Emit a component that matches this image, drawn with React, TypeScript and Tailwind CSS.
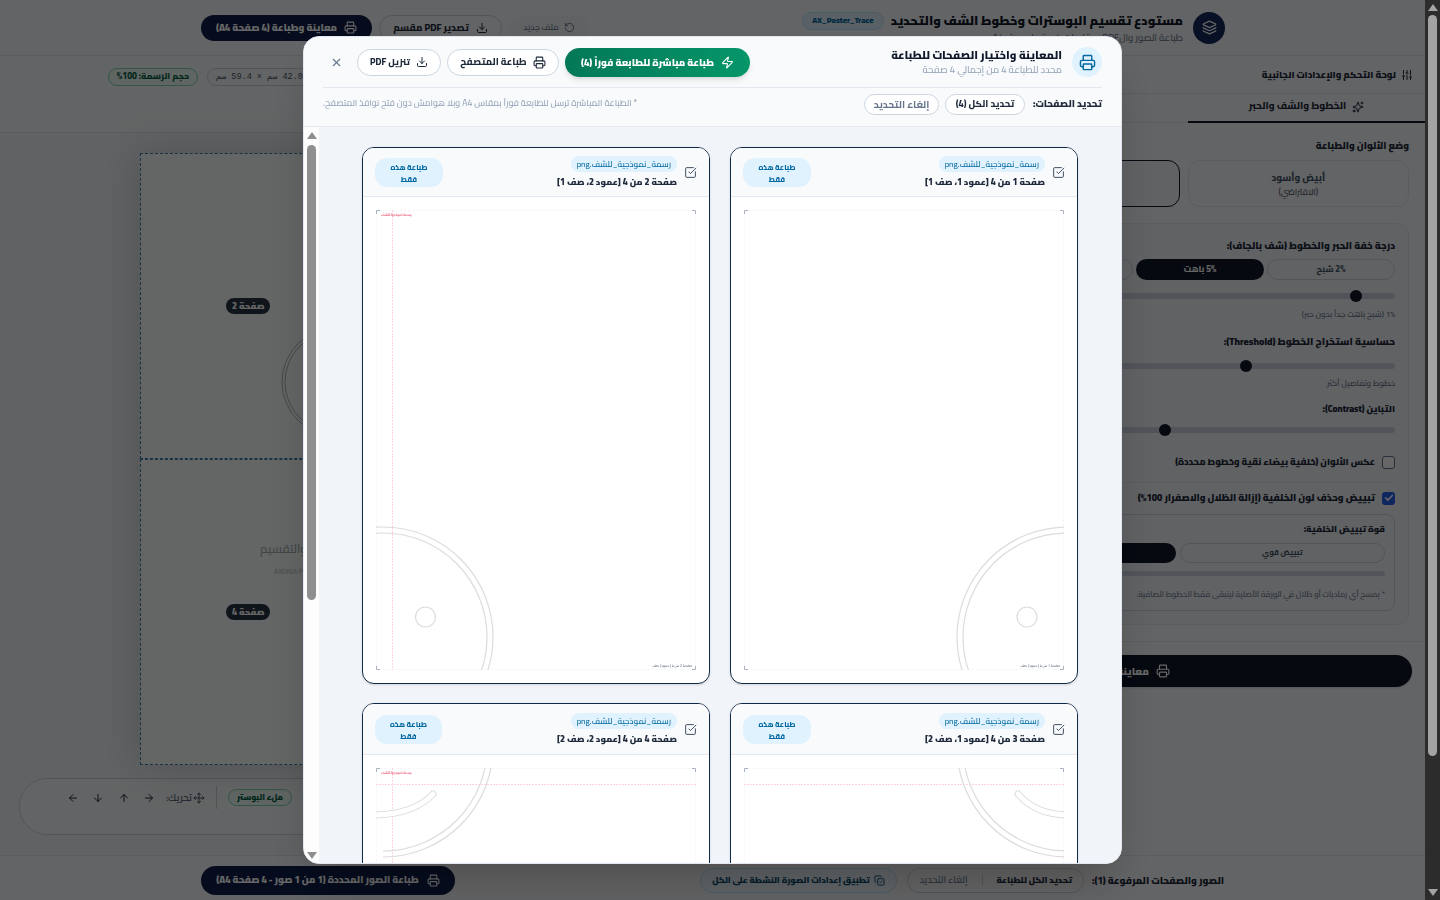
import { Layers, Printer, Download, RotateCcw, Zap, X, SquareCheckBig, SlidersVertical, Sparkles, Check, Move, ArrowLeft, ArrowDown, ArrowUp, ArrowRight, CopyCheck } from "lucide-react";
import type { ReactNode } from "react";

const font = "font-['Cairo','DejaVu_Sans',sans-serif]";

function Thumb({ cls }: { cls: string }) {
  return <div className={`absolute -top-[3px] w-3 h-3 rounded-full bg-[#0f172a] ${cls}`} />;
}

function PageArt({ n }: { n: number }) {
  const isRightCol = n === 1 || n === 3;
  const isTop = n <= 2;
  return (
    <svg viewBox="0 0 320 460" className="w-[320px] h-[460px] block" fill="none">
      <rect x="0.5" y="0.5" width="319" height="459" stroke="#f1f3f5" strokeDasharray="2 2" />
      {isRightCol ? null : <line x1="16.5" y1="0" x2="16.5" y2="460" stroke="#fcd3de" strokeDasharray="2 1" />}
      {isTop ? null : <line x1="0" y1="16.5" x2="320" y2="16.5" stroke="#fcd3de" strokeDasharray="2 1" />}
      <path d="M0.5 4V.5H4M316 .5h3.500V4M.5 456v3.500H4M316 459.500h3.500V456" stroke="#a8b1bd" />
      {n === 1 && (
        <g stroke="#dcdcdc" strokeWidth="1.2">
          <circle cx="323" cy="427" r="110" />
          <circle cx="323" cy="427" r="104" />
          <circle cx="283" cy="407" r="10" />
        </g>
      )}
      {n === 2 && (
        <g stroke="#dcdcdc" strokeWidth="1.2">
          <circle cx="7" cy="427" r="110" />
          <circle cx="7" cy="427" r="104" />
          <circle cx="49.500" cy="407" r="10" />
        </g>
      )}
      {n === 3 && (
        <g>
          <path d="M213 -21a110 110 0 0 0 110 110" stroke="#dcdcdc" strokeWidth="1.2" />
          <path d="M219 -21a104 104 0 0 0 104 104" stroke="#dcdcdc" strokeWidth="1.2" />
          <path d="M274 26Q292 47 325 47" stroke="#dcdcdc" strokeWidth="7" strokeLinecap="round" />
          <path d="M274 26Q292 47 325 47" stroke="#ffffff" strokeWidth="5" strokeLinecap="round" />
        </g>
      )}
      {n === 4 && (
        <g>
          <path d="M117 -21a110 110 0 0 1 -110 110" stroke="#dcdcdc" strokeWidth="1.2" />
          <path d="M111 -21a104 104 0 0 1 -104 104" stroke="#dcdcdc" strokeWidth="1.2" />
          <path d="M57 26Q38 47 -5 47" stroke="#dcdcdc" strokeWidth="7" strokeLinecap="round" />
          <path d="M57 26Q38 47 -5 47" stroke="#ffffff" strokeWidth="5" strokeLinecap="round" />
        </g>
      )}
      {!isRightCol && <text x="5" y="6" fontSize="3.5" fill="#e11d48" direction="rtl" textAnchor="end">رسمة نموذجية للشف</text>}
      {isTop && <text x="316" y="457" fontSize="3.5" fill="#475569" direction="rtl" textAnchor="start">{`صفحة ${n} من 4 | عمود | صف`}</text>}
    </svg>
  );
}

function PageCard({ n, col, row, pillW }: { n: number; col: number; row: number; pillW: string }) {
  return (
    <div className="w-[348px] border-[1.5px] border-[#0f2a47] rounded-xl bg-white overflow-hidden shadow-sm">
      <div className={`${row === 1 ? "h-[49px]" : "h-[51px]"} bg-[#f8fafc] border-b border-[#e2e8f0] flex items-center justify-between pr-[12px] pl-[12px]`}>
        <div className="flex items-center gap-[7px]">
          <SquareCheckBig size={13} strokeWidth={1.7} className="text-[#334155]" />
          <div className="flex flex-col items-start">
            <span className="h-[16px] px-[6px] rounded-full bg-[#e0f2fe] text-[#0369a1] text-[8.250px] font-medium leading-[16px]">رسمة_نموذجية_للشف.png</span>
            <span className="mt-[3px] text-[9px] leading-[14px] font-black text-[#1e293b]">{`صفحة ${n} من 4 [عمود ${col}، صف ${row}]`}</span>
          </div>
        </div>
        <div className={`${pillW} h-[29px] rounded-xl bg-[#e0f2fe] text-[#0369a1] text-[7.500px] leading-[12px] font-extrabold flex items-center justify-center text-center px-[12px] pt-[2px]`}>طباعة هذه فقط</div>
      </div>
      <div className="p-[13px]">
        <PageArt n={n} />
      </div>
    </div>
  );
}

function SideLabel({ children, cls }: { children: ReactNode; cls: string }) {
  return <div className={`h-[14px] leading-[14px] font-black text-[#1e293b] ${cls}`}>{children}</div>;
}

function Hint({ children, cls }: { children: ReactNode; cls: string }) {
  return <div className={`h-[12px] text-[8.250px] leading-[12px] font-medium text-[#64748b] whitespace-nowrap ${cls}`}>{children}</div>;
}

function Track({ thumb, cls }: { thumb: string; cls: string }) {
  return (
    <div className={`relative h-[6px] rounded-full bg-[#cbd5e1] ${cls}`}>
      <Thumb cls={thumb} />
    </div>
  );
}

function Sidebar() {
  return (
    <aside className="w-[484px] h-[799px] shrink-0 bg-[#f8fafc] border-l border-[#e2e8f0] flex flex-col">
      <div className="h-[38px] flex items-center gap-[5px] border-b border-[#e2e8f0] pr-[12px] shrink-0">
        <SlidersVertical size={12} className="text-[#1e293b]" />
        <span className="text-[9.200px] font-black text-[#1e293b]">لوحة التحكم والإعدادات الجانبية</span>
      </div>
      <div className="h-[29px] flex border-b border-[#e2e8f0] shrink-0">
        <div className="w-[237px] h-[29px] pb-[2px] border-b-2 border-[#0f172a] flex items-center justify-center gap-[6px] text-[9.800px] font-extrabold text-[#1e293b]">
          <Sparkles size={12} />
          الخطوط والشف والحبر
        </div>
      </div>
      <div className="mr-4 ml-4">
        <div className="mt-[15px] h-[16px] text-[9.500px] leading-[16px] font-black text-[#1e293b]">وضع الألوان والطباعة</div>
        <div className="mt-[6px] flex gap-2">
          <div className="w-[222px] h-[47px] rounded-xl border border-[#e2e8f0] flex flex-col items-center justify-center text-[#475569]">
            <span className="text-[9.600px] font-extrabold leading-[16px]">أبيض وأسود</span>
            <span className="text-[8.700px] leading-[14px] font-medium">(الافتراضي)</span>
          </div>
          <div className="w-[222px] h-[47px] rounded-xl border-[1.5px] border-[#0f172a] bg-[#f1f5f9]" />
        </div>
        <div className="mt-4 h-[402px] rounded-xl border border-[#e2e8f0] bg-[#f1f5f9] pr-[13px] pl-[13px]">
          <SideLabel cls="mt-[14px] text-[9.600px]">درجة خفة الحبر والخطوط (شف بالجاف):</SideLabel>
          <div className="mt-[7px] flex gap-[3px]">
            <div className="w-[128px] h-[21px] rounded-full border border-[#cbd5e1] flex items-center justify-center text-[8.600px] font-extrabold text-[#475569]">2% شبح</div>
            <div className="w-[128px] h-[21px] rounded-full bg-[#0f172a] flex items-center justify-center text-[8.600px] font-extrabold text-white">5% باهت</div>
            <div className="w-[128px] h-[21px] rounded-full border border-[#cbd5e1]" />
          </div>
          <Track thumb="right-[33px]" cls="mt-[13px]" />
          <Hint cls="mt-[9px]">1% (شبح باهت جداً بدون حبر)</Hint>
          <SideLabel cls="mt-[15px] text-[9.800px]">حساسية استخراج الخطوط (Threshold):</SideLabel>
          <Track thumb="right-[143px]" cls="mt-[14px]" />
          <Hint cls="mt-[8px]">خطوط وتفاصيل أكثر</Hint>
          <SideLabel cls="mt-[13px] text-[9.100px]">التباين (Contrast):</SideLabel>
          <Track thumb="right-[224px]" cls="mt-[11px]" />
          <div className="mt-[22px] h-[14px] flex items-center gap-[7px]">
            <span className="w-[13px] h-[13px] rounded-[3px] border border-[#64748b] bg-white" />
            <span className="text-[9.100px] font-black text-[#1e293b]">عكس الألوان (خلفية بيضاء نقية وخطوط محددة)</span>
          </div>
          <div className="mt-[13px] h-px bg-[#e2e8f0]" />
          <div className="mt-[8px] h-[14px] flex items-center gap-[7px]">
            <span className="w-[13px] h-[13px] rounded-[3px] bg-[#2563eb] flex items-center justify-center">
              <Check size={10} strokeWidth={4} className="text-white" />
            </span>
            <span className="text-[9.500px] font-black text-[#1e293b]">تبييض وحذف لون الخلفية (إزالة الظلال والاصفرار 100%)</span>
          </div>
          <div className="mt-[9px] h-[97px] rounded-lg border border-[#cbd5e1] pr-[9px] pl-[9px]">
            <div className="mt-[7px] h-[14px] text-[8.750px] leading-[14px] font-black text-[#1e293b]">قوة تبييض الخلفية:</div>
            <div className="mt-[7px] flex gap-[4px]">
              <div className="w-[208px] h-[20px] rounded-full border border-[#cbd5e1] flex items-center justify-center text-[7.500px] font-extrabold text-[#475569]">تبييض قوي</div>
              <div className="w-[196px] h-[20px] rounded-full bg-[#0f172a]" />
            </div>
            <div className="mt-[8px] h-[5px] rounded-full bg-[#cbd5e1]" />
            <div className="mt-[13px] h-[12px] text-[8px] leading-[12px] font-medium text-[#64748b] whitespace-nowrap">* يمسح أي رماديات أو ظلال في الورقة الأصلية ليتبقى فقط الخطوط الصافية.</div>
          </div>
        </div>
      </div>
      <div className="mt-4 h-px bg-[#e2e8f0]" />
      <div className="mt-[13px] mr-[13px] ml-[13px] h-[32px] rounded-full bg-[#0f172a] flex items-center pr-[242px] gap-[7px] text-white text-[10px] font-black shadow">
        <Printer size={14} />
        <span className="whitespace-nowrap">معاينة وطباعة الصور المحددة</span>
      </div>
    </aside>
  );
}

function PosterCell({ label }: { label?: string }) {
  return (
    <div className="border border-dashed border-[#3f7ea8] flex items-center justify-center">
      {label && <span className="h-[16px] w-[44px] rounded-full bg-[#263645] text-[9px] leading-[16px] font-black text-white text-center">{label}</span>}
    </div>
  );
}

function Canvas() {
  return (
    <section className="flex-1 h-[799px] flex flex-col bg-[#f1f5f9]">
      <div className="h-[77px] shrink-0 border-b border-[#e2e8f0] bg-[#f8fafc] flex items-start justify-end gap-[9px] pt-[12px] pl-[108px]">
        <div className="h-[18px] w-[200px] rounded-full border border-[#cbd5e1] flex items-center justify-end pl-[8px] font-['Liberation_Mono',monospace] text-[8.500px] text-[#475569]">42.0 سم × 59.4 سم</div>
        <div className="h-[18px] w-[90px] rounded-full border border-[#86d6ac] bg-[#ecfdf5] flex items-center justify-center text-[8.800px] font-extrabold text-[#065f46]">حجم الرسمة: 100%</div>
      </div>
      <div className="mt-[20px] self-end ml-[140px] relative w-[433px] h-[612px] shadow-[0_0_40px_rgba(0,0,0,0.18)] bg-[#f9ffff] grid grid-cols-2 grid-rows-2 shrink-0">
        <PosterCell />
        <PosterCell label="صفحة 2" />
        <PosterCell />
        <PosterCell label="صفحة 4" />
        <svg className="absolute left-[141px] top-[174px] w-[110px] h-[110px]" viewBox="0 0 110 110" fill="none">
          <circle cx="55" cy="55" r="54" stroke="#aab0b5" />
          <circle cx="55" cy="55" r="51" stroke="#aab0b5" />
        </svg>
        <span className="absolute left-[120px] top-[387px] text-[12px] font-medium text-[#a4a9ad] whitespace-nowrap">دليل الشف والتقسيم</span>
        <span className="absolute left-[134px] top-[414px] text-[7px] font-medium text-[#b7bbbe] whitespace-nowrap" dir="ltr">AXONIA POSTER</span>
      </div>
      <div className="mt-[13px] self-end ml-[19px] w-[675px] h-[57px] shrink-0 rounded-[28px] border border-[#cbd5e1] bg-[#f8fafc] flex items-start justify-end pl-[47px] pt-[10px]">
        <div className="h-[17px] w-[64px] rounded-full border border-[#86d6ac] bg-[#ecfdf5] flex items-center justify-center text-[8px] font-black text-[#065f46] ml-[11px]">ملء البوستر</div>
        <div className="h-[23px] w-px -mt-[3px] bg-[#cbd5e1] ml-[11px]" />
        <div className="h-[17px] flex items-center text-[#475569]">
          <Move size={12} />
          <span className="text-[10px] font-medium mr-[1px] ml-[11px]">تحريك:</span>
          <div className="flex items-center gap-[13.300px] text-[#1e293b]">
            <ArrowRight size={12} />
            <ArrowUp size={12} />
            <ArrowDown size={12} />
            <ArrowLeft size={12} />
          </div>
        </div>
      </div>
    </section>
  );
}

function PageBg() {
  return (
    <div className="w-[1425px] h-[900px] flex flex-col bg-[#f8fafc]" dir="rtl">
      <header className="h-[56px] shrink-0 border-b border-[#e2e8f0] flex items-center justify-between pr-[200px] pl-[201px]">
        <div className="flex items-center gap-[10px]">
          <div className="w-[32px] h-[32px] rounded-full bg-[#14295e] text-white flex items-center justify-center"><Layers size={15} /></div>
          <div className="flex flex-col">
            <div className="flex items-center gap-[7px] pt-[2px]">
              <span className="text-[12.500px] leading-[18px] font-black text-[#0f172a] whitespace-nowrap">مستودع تقسيم البوسترات وخطوط الشف والتحديد</span>
              <span className="h-[18px] w-[82px] text-center rounded-full bg-[#e0f2fe] border border-[#bae6fd] text-[#0369a1] text-[8px] leading-[16px] font-black">AX_Poster_Trace</span>
            </div>
            <span className="mt-[1px] text-[9.500px] font-medium text-[#64748b]">طباعة الصور والPDF بمقاسات كبيرة على ورق A4</span>
          </div>
        </div>
        <div className="flex items-center gap-[7px]">
          <div className="h-[24px] w-[80px] rounded-full bg-[#f1f5f9] flex items-center justify-center gap-[5px] text-[8.500px] font-medium text-[#64748b]"><RotateCcw size={11} />ملف جديد</div>
          <div className="h-[26px] w-[123px] rounded-full border border-[#cbd5e1] flex items-center justify-center gap-[7px] text-[9.600px] font-extrabold text-[#1e293b]"><Download size={12} />تصدير PDF مقسم</div>
          <div className="h-[26px] w-[171px] rounded-full bg-[#0f1f4a] flex items-center justify-center gap-[7px] text-[9.600px] font-black text-white"><Printer size={13} />معاينة وطباعة (4 صفحة A4)</div>
        </div>
      </header>
      <div className="flex h-[799px]">
        <Sidebar />
        <Canvas />
      </div>
      <footer className="h-[45px] shrink-0 border-t border-[#e2e8f0] bg-[#f8fafc] flex items-center justify-between pt-[4px] pr-[201px] pl-[201px]">
        <div className="flex items-center">
          <span className="text-[9.600px] font-black text-[#1e293b]">الصور والصفحات المرفوعة (1):</span>
          <div className="mr-[8px] w-[177px] h-[25px] rounded-full border border-[#cbd5e1] flex items-center justify-center gap-[14px]">
            <span className="text-[8.600px] font-black text-[#1e293b]">تحديد الكل للطباعة</span>
            <span className="w-px h-3 bg-[#cbd5e1]" />
            <span className="text-[9.500px] font-medium text-[#64748b]">إلغاء التحديد</span>
          </div>
          <div className="mr-[10px] w-[197px] h-[25px] rounded-full border border-[#bae6fd] bg-[#f0f9ff] flex items-center justify-center gap-[4px] text-[8.500px] font-black text-[#0c4a6e]">
            <CopyCheck size={11} />
            تطبيق إعدادات الصورة النشطة على الكل
          </div>
        </div>
        <div className="w-[254px] h-[29px] rounded-full bg-[#0f1f4a] flex items-center justify-center gap-[8px] text-[9.500px] font-black text-white">
          <Printer size={13} />
          طباعة الصور المحددة (1 من 1 صور - 4 صفحة A4)
        </div>
      </footer>
    </div>
  );
}

function Modal() {
  return (
    <div className="w-[819px] h-[828px] rounded-2xl bg-[#f8fafc] border border-[#e2e8f0] overflow-hidden flex flex-col shadow-2xl" dir="rtl">
      <div className="h-[90px] shrink-0 border-b border-[#e2e8f0] bg-[#f8fafc] pr-[19px] pl-[19px]">
        <div className="h-[51px] border-b border-[#e2e8f0] flex items-center justify-between">
          <div className="flex items-center gap-[10px]">
            <div className="w-[30px] h-[30px] rounded-full bg-[#e0f2fe] text-[#0369a1] flex items-center justify-center"><Printer size={17} /></div>
            <div className="flex flex-col">
              <span className="text-[11px] leading-[15px] font-black text-[#0f172a]">المعاينة واختيار الصفحات للطباعة</span>
              <span className="text-[9.500px] leading-[14px] font-medium text-[#94a3b8]">محدد للطباعة 4 من إجمالي 4 صفحة</span>
            </div>
          </div>
          <div className="flex items-center gap-[6px]">
            <div className="h-[29px] w-[185px] rounded-full bg-gradient-to-l from-[#059669] to-[#047857] text-white flex items-center justify-center gap-[7px] text-[9.600px] font-black shadow-md"><Zap size={13} />طباعة مباشرة للطابعة فوراً (4)</div>
            <div className="h-[27px] w-[112px] rounded-full border border-[#cbd5e1] bg-white text-[#1e293b] flex items-center justify-center gap-[6px] text-[9.500px] font-extrabold"><Printer size={13} />طباعة المتصفح</div>
            <div className="h-[27px] w-[84px] rounded-full border border-[#cbd5e1] bg-white text-[#1e293b] flex items-center justify-center gap-[6px] text-[9.200px] font-extrabold"><Download size={12} />تنزيل PDF</div>
            <X size={13} className="text-[#64748b] mr-[8px] ml-[7px]" />
          </div>
        </div>
        <div className="h-[37px] flex items-center justify-between pb-[5px]">
          <div className="flex items-center">
            <span className="text-[9.500px] font-black text-[#1e293b]">تحديد الصفحات:</span>
            <div className="mr-[8px] h-[21px] w-[80px] rounded-full border border-[#cbd5e1] bg-white flex items-center justify-center text-[9.400px] font-extrabold text-[#1e293b]">تحديد الكل (4)</div>
            <div className="mr-[6px] h-[21px] w-[75px] rounded-full border border-[#cbd5e1] bg-white flex items-center justify-center text-[10px] font-bold text-[#64748b]">إلغاء التحديد</div>
          </div>
          <span className="text-[8.800px] font-medium text-[#94a3b8]">* الطباعة المباشرة ترسل للطابعة فوراً بمقاس A4 وبلا هوامش دون فتح نوافذ المتصفح.</span>
        </div>
      </div>
      <div className="flex-1 min-h-0 flex">
        <div className="flex-1 bg-[#f1f5f9] overflow-hidden pt-[20px]">
          <div className="w-[716px] mx-auto grid grid-cols-2 gap-x-[20px] gap-y-[19px]">
            <PageCard n={1} col={1} row={1} pillW="w-[68px]" />
            <PageCard n={2} col={2} row={1} pillW="w-[68px]" />
            <PageCard n={3} col={1} row={2} pillW="w-[68px]" />
            <PageCard n={4} col={2} row={2} pillW="w-[67px]" />
          </div>
        </div>
        <div className="w-[15px] shrink-0 bg-[#fdfdfd] flex flex-col items-center pt-[5px] pb-[4px]">
          <span className="w-0 h-0 border-x-[5px] border-x-transparent border-b-[7px] border-b-[#8f8f8f]" />
          <div className="mt-[6px] w-[9px] h-[455px] rounded-full bg-[#8f8f8f]" />
          <div className="flex-1" />
          <span className="w-0 h-0 border-x-[5px] border-x-transparent border-t-[7px] border-t-[#8f8f8f]" />
        </div>
      </div>
    </div>
  );
}

export default function App() {
  return (
    <div className={`w-[1440px] h-[900px] overflow-hidden flex ${font}`}>
      <div className="relative w-[1425px] h-[900px]">
        <PageBg />
        <div className="absolute inset-0 bg-black/60 backdrop-blur-[0.5px] flex items-center justify-center">
          <Modal />
        </div>
      </div>
      <div className="w-[15px] h-[900px] bg-[#2c2c2c] flex flex-col items-center pt-[4px] pb-[4px]">
        <span className="w-0 h-0 border-x-[5px] border-x-transparent border-b-[7px] border-b-[#a3a3a3]" />
        <div className="mt-[4px] w-[9px] h-[741px] rounded-full bg-[#a3a3a3]" />
        <div className="flex-1" />
        <span className="w-0 h-0 border-x-[5px] border-x-transparent border-t-[7px] border-t-[#a3a3a3]" />
      </div>
    </div>
  );
}
